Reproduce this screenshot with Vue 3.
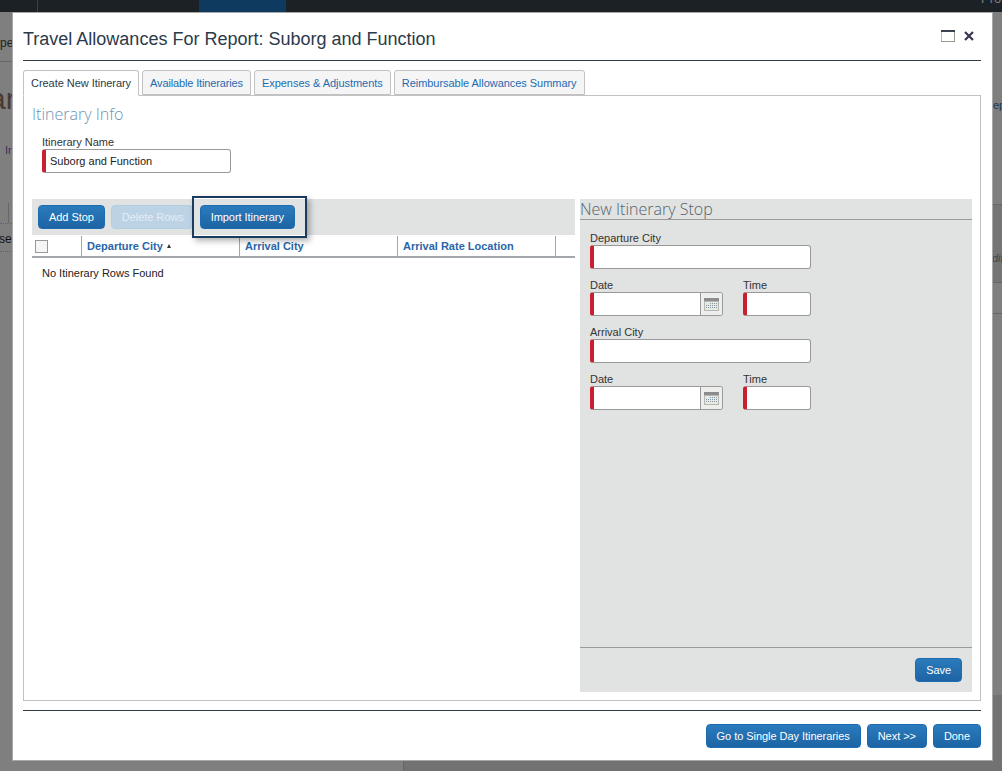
<template>
  <div class="page">
    <!-- dimmed page behind the dialog -->
    <div class="backdrop">
      <div class="topbar"><span class="top-active"></span><span class="top-div"></span><span class="top-text">Pro</span></div>
      <i class="bg-row"></i>
      <i class="bg-low"></i>
      <span class="bg bg-pe">pe</span>
      <span class="bg bg-ar">ar</span>
      <span class="bg bg-ir">Ir</span>
      <span class="bg bg-se">se</span>
      <span class="bg bg-ep">ep</span>
      <span class="bg bg-dit">dit</span>
      <i class="bg-line l1"></i>
      <i class="bg-line l2"></i>
      <i class="bg-line l3"></i>
      <i class="bg-line l4"></i>
      <i class="bg-dot d1"></i>
      <i class="bg-dot d2"></i>
      <i class="bg-v v1"></i>
      <i class="bg-v v2"></i>
    </div>

    <div class="modal">
      <div class="modal-head">
        <h1>Travel Allowances For Report: Suborg and Function</h1>
        <div class="head-icons">
          <svg width="14" height="12" viewBox="0 0 14 12">
            <rect x="0.5" y="0.5" width="13" height="11" fill="#fff" stroke="#9a9a90" />
            <rect x="0" y="0" width="14" height="2" fill="#39424e" />
            <rect x="0" y="2" width="1" height="9" fill="#8cc8ee" />
          </svg>
          <svg width="10" height="10" viewBox="0 0 10 10">
            <path d="M1 1 L9 9 M9 1 L1 9" stroke="#3a3550" stroke-width="2.2" />
          </svg>
        </div>
      </div>

      <div class="tabs">
        <a v-for="(tab, i) in tabs" :key="tab" class="tab" :class="{ active: i === 0 }">{{ tab }}</a>
      </div>

      <div class="panel">
        <h2 class="section-title">Itinerary Info</h2>
        <div class="name-field">
          <label>Itinerary Name</label>
          <div class="input req name-input"><input type="text" value="Suborg and Function" /></div>
        </div>

        <div class="columns">
          <div class="left">
            <div class="toolbar">
              <button class="btn">Add Stop</button>
              <button class="btn disabled">Delete Rows</button>
              <button class="btn import">Import Itinerary</button>
              <div class="highlight"></div>
            </div>
            <div class="thead">
              <div class="th th-check"><span class="checkbox"></span></div>
              <div class="th th-col">Departure City<span class="sort"></span></div>
              <div class="th th-col">Arrival City</div>
              <div class="th th-col">Arrival Rate Location</div>
              <div class="th th-end"></div>
            </div>
            <div class="empty">No Itinerary Rows Found</div>
          </div>

          <div class="right">
            <h2 class="stop-title">New Itinerary Stop</h2>
            <div class="stop-form">
              <template v-for="city in ['Departure City', 'Arrival City']" :key="city">
                <div class="field">
                  <label>{{ city }}</label>
                  <div class="input req city-input"><input type="text" /></div>
                </div>
                <div class="date-row">
                  <div class="field">
                    <label>Date</label>
                    <div class="input req date-input">
                      <input type="text" />
                      <span class="cal">
                        <svg width="15" height="13" viewBox="0 0 15 13">
                          <rect x="0" y="0" width="15" height="13" fill="#b5b5b2" />
                          <rect x="0" y="0" width="15" height="3" fill="#8c8c8c" />
                          <rect x="1" y="4" width="13" height="8" fill="#e9e9e4" />
                          <path d="M6 5.5H14M2 7.5H14M2 9.5H14" stroke="#8298a8" stroke-width="1" stroke-dasharray="1 1" />
                        </svg>
                      </span>
                    </div>
                  </div>
                  <div class="field">
                    <label>Time</label>
                    <div class="input req time-input"><input type="text" /></div>
                  </div>
                </div>
              </template>
            </div>
            <div class="stop-foot">
              <button class="btn">Save</button>
            </div>
          </div>
        </div>
      </div>

      <div class="modal-foot">
        <button class="btn">Go to Single Day Itineraries</button>
        <button class="btn">Next &gt;&gt;</button>
        <button class="btn">Done</button>
      </div>
    </div>
  </div>
</template>

<script setup>
const tabs = [
  'Create New Itinerary',
  'Available Itineraries',
  'Expenses & Adjustments',
  'Reimbursable Allowances Summary'
];
</script>

<style>
html, body {
  margin: 0;
  height: 771px;
  overflow: hidden;
}
</style>

<style scoped>
.page {
  position: relative;
  width: 1002px;
  height: 771px;
  overflow: hidden;
  background: #7f7f7f;
  font-family: "Liberation Sans", Arial, sans-serif;
  font-size: 11px;
  color: #1f2a36;
}

/* backdrop scraps */
.backdrop {
  position: absolute;
  inset: 0;
}
.topbar {
  height: 12px;
  background: #1c2126;
  position: relative;
  overflow: hidden;
}
.top-active {
  position: absolute;
  left: 199px;
  width: 87px;
  height: 12px;
  background: #0e3a5f;
}
.top-div {
  position: absolute;
  left: 37px;
  width: 1px;
  height: 12px;
  background: #3a3f44;
}
.top-text {
  position: absolute;
  left: 981px;
  top: -9px;
  font-size: 13px;
  color: #7a7f85;
}
.bg {
  position: absolute;
  color: #1d3550;
  font-size: 11px;
}
.bg-pe { left: 0; top: 36px; font-size: 12px; color: #222; }
.bg-ar { left: -11px; top: 82px; font-size: 30px; color: #4a3a32; }
.bg-ir { left: 5px; top: 144px; color: #3c2f5c; }
.bg-se { left: -1px; top: 232px; font-size: 12px; color: #111; }
.bg-ep { left: 993px; top: 99px; }
.bg-dit { left: 992px; top: 252px; font-style: italic; color: #444; }
.bg-line {
  position: absolute;
  height: 1px;
  background: #666;
}
.l1 { left: 0; width: 12px; top: 61px; }
.l2 { left: 993px; width: 9px; top: 204px; }
.l3 { left: 993px; width: 9px; top: 282px; }
.l4 { left: 993px; width: 9px; top: 313px; }
.bg-dot {
  position: absolute;
  left: 0;
  width: 12px;
  border-top: 1px dotted #4a6a90;
}
.d1 { top: 223px; }
.d2 { top: 251px; }
.bg-v {
  position: absolute;
  width: 1px;
  background: #666;
}
.v1 { left: 8px; top: 203px; height: 20px; }
.v2 { left: 403px; top: 761px; height: 10px; }
.bg-row {
  position: absolute;
  left: 993px;
  right: 0;
  top: 204px;
  height: 78px;
  background: #757575;
}
.bg-low {
  position: absolute;
  left: 404px;
  right: 0;
  top: 695px;
  bottom: 0;
  background: #727272;
}

/* dialog */
.modal {
  position: absolute;
  left: 12px;
  top: 12px;
  width: 958px;
  height: 747px;
  background: #fff;
  border: 1px solid #a8a8a8;
  display: flex;
  flex-direction: column;
  padding: 0 11px 0 10px;
}
.modal-head {
  height: 47px;
  border-bottom: 1px solid #333b44;
  display: flex;
  align-items: center;
  justify-content: space-between;
  flex-shrink: 0;
}
h1 {
  margin: 6px 0 0;
  font-size: 18px;
  font-weight: 400;
  color: #2b3a4a;
}
.head-icons {
  display: flex;
  align-items: center;
  gap: 9px;
  margin-right: 7px;
  margin-top: -2px;
}

.tabs {
  display: flex;
  gap: 3px;
  margin-top: 9px;
  height: 25px;
  flex-shrink: 0;
  position: relative;
  z-index: 1;
}
.tab {
  padding: 0 7px;
  line-height: 24px;
  height: 25px;
  box-sizing: border-box;
  background: #f5f5f5;
  border: 1px solid #c2c2c2;
  border-radius: 3px 3px 0 0;
  color: #1f6bb0;
  letter-spacing: -0.04px;
}
.tab:nth-child(2) {
  letter-spacing: -0.14px;
}
.tab.active {
  background: #fff;
  color: #2b3a4a;
  height: 26px;
  border-bottom-color: #fff;
}

.panel {
  height: 606px;
  box-sizing: border-box;
  border: 1px solid #c2c2c2;
  padding: 7px 8px 8px 8px;
  display: flex;
  flex-direction: column;
  flex-shrink: 0;
}
.section-title {
  margin: 0;
  font-family: "Open Sans", sans-serif;
  font-size: 16px;
  font-weight: 300;
  color: #6b93b3;
  line-height: 22px;
}
.name-field {
  margin: 11px 0 0 10px;
  height: 63px;
}
label {
  display: block;
  line-height: 13px;
  height: 13px;
  color: #333;
}
.input {
  position: relative;
  display: flex;
  height: 24px;
  box-sizing: border-box;
  border: 1px solid #999;
  border-radius: 3px;
  background: #fff;
  overflow: hidden;
}
.input input {
  flex: 1;
  min-width: 0;
  border: 0;
  outline: 0;
  padding: 0 4px;
  margin: 0;
  background: transparent;
  font: inherit;
  color: #222;
}
.req {
  border-left: 4px solid #c8202e;
}
.name-input { width: 189px; }
.city-input { width: 221px; }
.date-input { width: 133px; }
.time-input { width: 68px; }
.cal {
  width: 22px;
  box-sizing: border-box;
  border-left: 1px solid #999;
  background: #eeeeec;
  display: flex;
  align-items: center;
  justify-content: center;
}

.columns {
  display: flex;
  flex: 1;
  min-height: 0;
}
.left {
  width: 543px;
  flex-shrink: 0;
}
.toolbar {
  position: relative;
  height: 36px;
  background: #e1e3e2;
  display: flex;
  align-items: center;
  gap: 6px;
  padding-left: 6px;
}
.btn {
  height: 24px;
  padding: 0 10px;
  border: 1px solid #1f6bb0;
  border-radius: 4px;
  background: linear-gradient(#2a7bbd, #1d64a4);
  color: #fff;
  font: inherit;
  letter-spacing: -0.05px;
  white-space: nowrap;
}
.btn.disabled {
  padding: 0 8px 0 10px;
  background: #bcd2e5;
  border-color: #b3cde2;
  color: #e6edf3;
}
.btn.import {
  margin-left: 1px;
}
.highlight {
  position: absolute;
  left: 160px;
  top: -3px;
  width: 115px;
  height: 42px;
  box-sizing: border-box;
  border: 2px solid #1a3a5f;
  box-shadow: 3px 3px 6px rgba(0, 0, 0, 0.3);
}
.thead {
  height: 23px;
  box-sizing: border-box;
  border-top: 1px solid #fff;
  border-bottom: 2px solid #a3a6ab;
  display: flex;
}
.th {
  box-sizing: border-box;
  line-height: 20px;
  border-right: 1px solid #a3a6ab;
  font-weight: 700;
  color: #2a66a8;
}
.th-check {
  width: 50px;
  display: flex;
  align-items: center;
  padding-left: 3px;
}
.checkbox {
  width: 11px;
  height: 11px;
  border: 1px solid #999;
  background: #f5f5f5;
}
.th-col {
  width: 158px;
  padding-left: 5px;
}
.th-end {
  width: 19px;
  border-right: 0;
}
.sort {
  display: inline-block;
  margin-left: 4px;
  vertical-align: 2px;
  border-left: 2px solid transparent;
  border-right: 2px solid transparent;
  border-bottom: 4px solid #333;
}
.empty {
  margin: 9px 0 0 10px;
  line-height: 13px;
  color: #222;
}

.right {
  width: 392px;
  margin-left: 5px;
  background: #e1e3e2;
  display: flex;
  flex-direction: column;
}
.stop-title {
  margin: 0;
  height: 21px;
  box-sizing: border-box;
  border-bottom: 1px solid #9a9a9a;
  font-family: "Open Sans", sans-serif;
  font-size: 16px;
  font-weight: 300;
  line-height: 21px;
  color: #55626e;
}
.stop-form {
  flex: 1;
  padding: 12px 10px 0;
}
.date-row {
  display: flex;
  gap: 20px;
  margin: 10px 0;
}
.stop-foot {
  height: 45px;
  box-sizing: border-box;
  border-top: 1px solid #9a9a9a;
  display: flex;
  justify-content: flex-end;
  align-items: center;
  padding-right: 10px;
}

.modal-foot {
  margin-top: 9px;
  height: 40px;
  border-top: 1px solid #333b44;
  display: flex;
  justify-content: flex-end;
  gap: 6px;
  padding-top: 13px;
}
</style>
